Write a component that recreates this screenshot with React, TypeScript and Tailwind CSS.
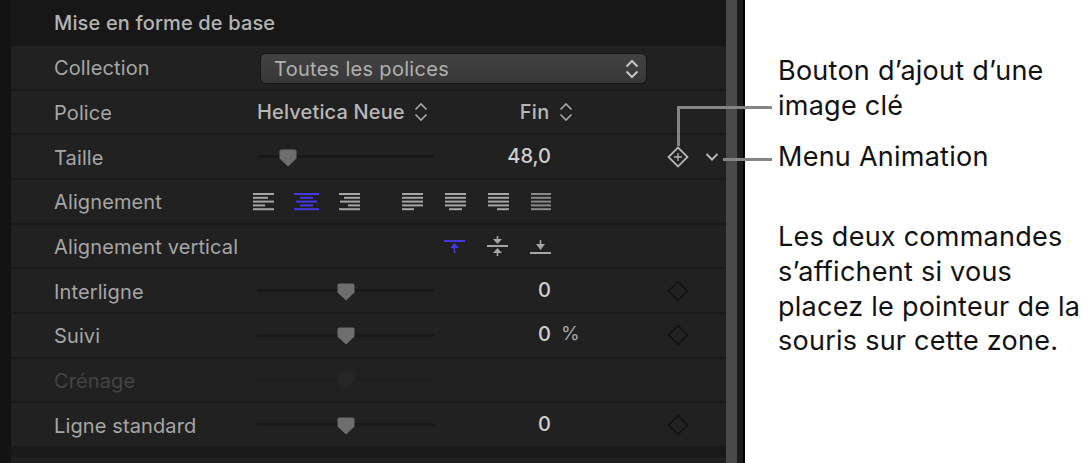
import React from "react";

const F = { fontFamily: 'Inter, "Liberation Sans", Arial, sans-serif' };

function Updown({ color = "#a8a8a8", w = 1.6 }: { color?: string; w?: number }) {
  return (
    <svg width="14" height="20" viewBox="0 0 14 20" fill="none" stroke={color} strokeWidth={w} className="shrink-0">
      <path d="M1.5 7.5 L7 2 L12.5 7.5" />
      <path d="M1.5 12.5 L7 18 L12.5 12.5" />
    </svg>
  );
}

function Slider({ at, dim }: { at: number; dim?: boolean }) {
  return (
    <div className="relative w-[177px] h-[20px] flex items-center shrink-0">
      <div className={`w-full h-[3px] rounded-full ${dim ? "bg-[#1e1e1e]" : "bg-[#191919]"}`} />
      <svg width="18" height="18" viewBox="0 0 18 18" className="absolute top-[2px]" style={{ left: at }}>
        <path d="M2.5 0.5 H15.5 Q17.5 0.5 17.5 2.5 V9.5 L9 17.5 L0.5 9.5 V2.5 Q0.5 0.5 2.5 0.5 Z" fill={dim ? "#262626" : "#6e6e6e"} />
      </svg>
    </div>
  );
}

function Diamond({ plus }: { plus?: boolean }) {
  const c = plus ? "#b4b4b4" : "#111111";
  return (
    <svg width="22" height="22" viewBox="0 0 22 22" fill="none" stroke={c} strokeWidth={plus ? 1.8 : 1.5}>
      <path d="M11 1.5 L20.5 11 L11 20.5 L1.5 11 Z" />
      {plus && <path d="M11 7 V15 M7 11 H15" strokeWidth="1.3" />}
    </svg>
  );
}

function Lines({ rows, color = "#a5a5a5" }: { rows: [number, number][]; color?: string }) {
  return (
    <svg width="25" height="20" viewBox="0 0 25 20" className="shrink-0">
      {rows.map(([x, w], i) => (
        <rect key={i} x={x} y={2 + i * 3.8} width={w} height="2" fill={color} />
      ))}
    </svg>
  );
}

function VIcon({ kind, color = "#a5a5a5" }: { kind: "top" | "mid" | "bot"; color?: string }) {
  return (
    <svg width="25" height="24" viewBox="0 0 25 24" className="shrink-0">
      {kind === "top" && (
        <g fill={color}>
          <rect x="2" y="6" width="21" height="2" />
          <path d="M12.5 9 L17 14 H8 Z" />
          <rect x="11.7" y="13" width="1.6" height="6" />
        </g>
      )}
      {kind === "mid" && (
        <g fill={color}>
          <rect x="2" y="11" width="21" height="2" />
          <rect x="11.7" y="2" width="1.6" height="4" />
          <path d="M12.5 10 L8 5 H17 Z" />
          <path d="M12.5 14 L17 19 H8 Z" />
          <rect x="11.7" y="18" width="1.6" height="4" />
        </g>
      )}
      {kind === "bot" && (
        <g fill={color}>
          <rect x="2" y="18" width="21" height="2" />
          <rect x="11.7" y="6" width="1.6" height="5" />
          <path d="M12.5 16 L8 10 H17 Z" />
        </g>
      )}
    </svg>
  );
}

function Row({ children }: { children: React.ReactNode }) {
  return (
    <div className="h-[44.67px] flex items-center pl-[43px] bg-[#212121] border-b-2 border-[#1a1a1a] shrink-0">
      {children}
    </div>
  );
}

function Label({ children, dim, w = "w-[203px]" }: { children: React.ReactNode; dim?: boolean; w?: string }) {
  return (
    <div className={`${w} shrink-0 pt-[2px] text-[20px] tracking-[0.12px] whitespace-nowrap ${dim ? "text-[#444444]" : "text-[#a6a6a6]"}`}>
      {children}
    </div>
  );
}

function Value({ v, suffix }: { v: string; suffix?: string }) {
  return (
    <div className="flex items-center pb-[2px]">
      <div className="w-[117px] shrink-0 text-right text-[20px] font-medium text-[#cfcfcf]">{v}</div>
      {suffix && <div className="ml-[10px] text-[19px] text-[#a6a6a6]">{suffix}</div>}
    </div>
  );
}

function SliderRow({ label, at, v, suffix }: { label: string; at: number; v: string; suffix?: string }) {
  return (
    <Row>
      <Label>{label}</Label>
      <Slider at={at} />
      <div className="w-[117px] shrink-0"><Value v={v} suffix={suffix} /></div>
      <div className="ml-[116px] w-[22px] h-[22px]"><Diamond /></div>
    </Row>
  );
}

export default function App() {
  return (
    <div className="relative w-[1091px] h-[463px] flex overflow-hidden bg-white antialiased" style={F}>
      <div className="w-[745px] h-full flex bg-[#171717] shrink-0">
        <div className="w-[11px] bg-[#131313] shrink-0" />
        <div className="w-[715px] flex flex-col shrink-0">
          <div className="h-[46px] pl-[43px] flex items-center bg-[#171717] text-[20px] tracking-[0.15px] font-medium text-[#b4b4b4] shrink-0">
            Mise en forme de base
          </div>
          <Row>
            <Label>Collection</Label>
            <div className="ml-[3px] mt-[3px] w-[387px] h-[31px] rounded-[6px] bg-gradient-to-b from-[#424242] to-[#383838] border border-[#151515] flex items-center justify-between pl-[13px] pr-[7px] text-[20px] tracking-[0.3px] text-[#b0b0b0]">
              <span>Toutes les polices</span>
              <Updown color="#c4c4c4" w={2} />
            </div>
          </Row>
          <Row>
            <Label>Police</Label>
            <div className="text-[20px] tracking-[0.15px] font-medium text-[#b8b8b8] whitespace-nowrap">Helvetica Neue</div>
            <div className="ml-[9px]"><Updown /></div>
            <div className="ml-[92px] w-[30px] text-[20px] tracking-[0.3px] font-medium text-[#b8b8b8]">Fin</div>
            <div className="ml-[9px]"><Updown /></div>
          </Row>
          <Row>
            <Label>Taille</Label>
            <Slider at={22} />
            <div className="w-[117px] shrink-0"><Value v="48,0" /></div>
            <div className="ml-[116px] w-[22px] h-[22px]"><Diamond plus /></div>
            <svg width="16" height="10" viewBox="0 0 16 10" fill="none" stroke="#b4b4b4" strokeWidth="2" className="ml-[15px]">
              <path d="M2.5 2 L8 7.5 L13.5 2" />
            </svg>
          </Row>
          <Row>
            <Label w="w-[197px]">Alignement</Label>
            <div className="flex gap-[18px]">
              <Lines rows={[[2, 21], [2, 15], [2, 21], [2, 12], [2, 21]]} />
              <Lines color="#4438e0" rows={[[0, 25], [6, 13], [2, 21], [6, 13], [0, 25]]} />
              <Lines rows={[[2, 21], [7, 16], [3, 20], [11, 12], [2, 21]]} />
              <div className="ml-[20px]"><Lines rows={[[2, 21], [2, 21], [2, 21], [2, 21], [2, 12]]} /></div>
              <Lines rows={[[2, 21], [2, 21], [2, 21], [2, 21], [6, 13]]} />
              <Lines rows={[[2, 21], [2, 21], [2, 21], [2, 21], [11, 12]]} />
              <Lines color="#8a8a8a" rows={[[2, 20], [2, 20], [2, 20], [2, 20], [2, 20]]} />
            </div>
          </Row>
          <Row>
            <Label w="w-[388px]">Alignement vertical</Label>
            <div className="flex gap-[18px]">
              <VIcon kind="top" color="#4438e0" />
              <VIcon kind="mid" />
              <VIcon kind="bot" />
            </div>
          </Row>
          <SliderRow label="Interligne" at={80} v="0" />
          <SliderRow label="Suivi" at={80} v="0" suffix="%" />
          <Row>
            <Label dim>Crénage</Label>
            <Slider at={80} dim />
          </Row>
          <SliderRow label="Ligne standard" at={80} v="0" />
          <div className="h-[9px] bg-[#191919] shrink-0" />
          <div className="flex-1 bg-[#1f1f1f]" />
        </div>
        <div className="w-[11px] bg-[#4a4a4a] shrink-0" />
        <div className="w-[6px] bg-[#1c1c1c] shrink-0" />
        <div className="w-[2px] bg-black shrink-0" />
      </div>

      <div className="flex-1 pl-[33px] pt-[54px] text-[27px] tracking-[0.25px] leading-[34.7px] text-[#111111] whitespace-nowrap">
        <p>Bouton d’ajout d’une</p>
        <p>image clé</p>
        <p className="mt-[17px]">Menu Animation</p>
        <p className="mt-[45px]">Les deux commandes</p>
        <p>s’affichent si vous</p>
        <p>placez le pointeur de la</p>
        <p>souris sur cette zone.</p>
      </div>

      <div className="absolute left-[677px] top-[106px] w-[95px] h-[3px] bg-[#858585]" />
      <div className="absolute left-[677px] top-[106px] w-[3px] h-[40px] bg-[#858585]" />
      <div className="absolute left-[723px] top-[158px] w-[49px] h-[3px] bg-[#858585]" />
    </div>
  );
}
